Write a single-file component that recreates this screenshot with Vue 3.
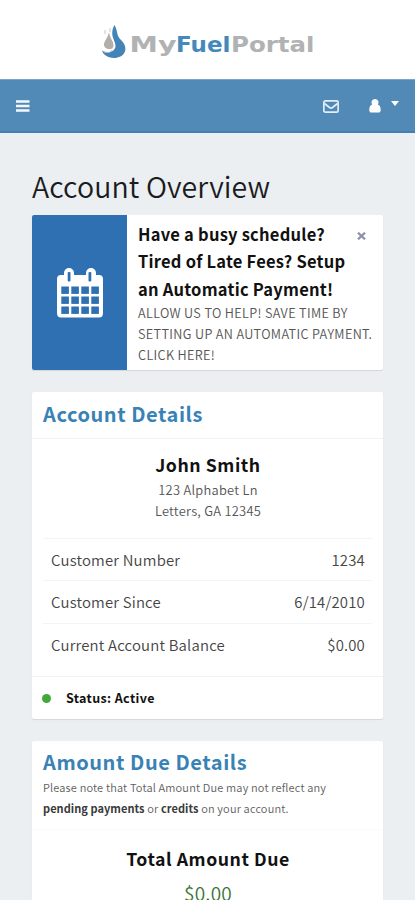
<script setup>
const details = [
  { label: 'Customer Number', value: '1234' },
  { label: 'Customer Since', value: '6/14/2010' },
  { label: 'Current Account Balance', value: '$0.00' },
]
const cellRows = [25, 35, 45]
const cellCols = [6, 16, 26, 36]
</script>

<template>
  <div class="page">
    <header class="brand">
      <svg class="logo" width="240" height="60" viewBox="0 0 240 60">
        <path d="M24.500 15C28 21 26 25 31 30C40 39 34 48 24 48C17 48 13 44 12 40.500C16 43 24 43 25.500 37C26.500 31 18.500 26 24.500 15Z" fill="#4383b5" />
        <path d="M19 22C19.500 28 23.800 31 23.500 36C22.500 41 14.500 39.500 14 35C13.700 31 18 28 19 22Z" fill="#b2aeaa" />
        <path d="M14 42C18 43 20 43 22 40M15 20v4M20 18v4" fill="none" stroke="#c4c9cd" stroke-width="1" />
        <g class="wordmark">
          <text x="39.500" y="41.700" textLength="47" lengthAdjust="spacingAndGlyphs" fill="#b1b2b4">My</text>
          <text x="86" y="41.700" textLength="54.500" lengthAdjust="spacingAndGlyphs" fill="#438aba">Fuel</text>
          <text x="141" y="41.700" textLength="83.500" lengthAdjust="spacingAndGlyphs" fill="#b1b2b4">Portal</text>
        </g>
      </svg>
    </header>

    <nav class="bar">
      <svg class="menu" width="14" height="12" viewBox="0 0 14 12"><path d="M0 1.500h13.500M0 6h13.500M0 10.500h13.500" stroke="#f3f7fb" stroke-width="2.300" /></svg>
      <svg class="mail" width="16" height="13" viewBox="0 0 16 13" fill="none" stroke="#e3edf6" stroke-width="1.700"><rect x=".85" y=".85" width="14.300" height="11.300" rx="1.500" /><path d="M1.500 3.500L6.500 7.500Q8 8.600 9.500 7.500L14.500 3.500" /></svg>
      <svg class="user" width="12" height="14" viewBox="0 0 12 14" fill="#fff"><path d="M6 0a3.400 3.400 0 0 1 2.800 5.400C11 6 12 8.500 11.600 12Q11.300 13.500 9.800 13.500H2.200Q.7 13.500.4 12C0 8.500 1 6 3.200 5.400A3.400 3.400 0 0 1 6 0Z" /></svg>
      <svg class="caret" width="8" height="5" viewBox="0 0 8 5"><path d="M0 0h8L4 5Z" fill="#fff" /></svg>
    </nav>

    <main>
      <h1>Account Overview</h1>

      <section class="promo">
        <div class="promo-icon">
          <svg width="46" height="50" viewBox="0 0 46 50">
            <path d="M4 7H7V5A5 5 0 0 1 17 5V7H29V5A5 5 0 0 1 39 5V7H42Q46 7 46 11V45Q46 49.500 42 49.500H4Q0 49.500 0 45V11Q0 7 4 7Z" fill="#fff" />
            <g fill="#2f70b2">
              <rect x="10.700" y="4" width="2.800" height="9.500" rx="1" />
              <rect x="31.500" y="4" width="2.800" height="9.500" rx="1" />
              <template v-for="y in cellRows" :key="y">
                <rect v-for="x in cellCols" :key="x" :x="x - 1.700" :y="y - 6.500" width="7.600" height="7.400" />
              </template>
            </g>
          </svg>
        </div>
        <div class="promo-body">
          <svg class="close" width="9" height="8" viewBox="0 0 9 8"><path d="M1 .7L8 7.300M8 .7L1 7.300" stroke="#8f90ae" stroke-width="2.300" /></svg>
          <h2>Have a busy schedule?<br>Tired of Late Fees? Setup<br>an Automatic Payment!</h2>
          <p>ALLOW US TO HELP! SAVE TIME BY<br>SETTING UP AN AUTOMATIC PAYMENT.<br>CLICK HERE!</p>
        </div>
      </section>

      <section class="card">
        <div class="card-head"><h3>Account Details</h3></div>
        <div class="person">
          <h4>John Smith</h4>
          <p>123 Alphabet Ln<br>Letters, GA 12345</p>
        </div>
        <dl>
          <div v-for="d in details" :key="d.label" class="row">
            <dt>{{ d.label }}</dt>
            <dd>{{ d.value }}</dd>
          </div>
        </dl>
        <div class="status"><i></i><b>Status: Active</b></div>
      </section>

      <section class="card due">
        <div class="due-head">
          <h3>Amount Due Details</h3>
          <p>Please note that Total Amount Due may not reflect any<br><b>pending payments</b> or <b>credits</b> on your account.</p>
        </div>
        <div class="total">
          <h4>Total Amount Due</h4>
          <span>$0.00</span>
        </div>
      </section>
    </main>
  </div>
</template>

<style>
body { overflow: hidden; }
</style>

<style scoped>
.page {
  height: 900px;
  overflow: hidden;
  background: #ebeff2;
  color: #444;
  font-family: "Noto Sans CJK SC", "Open Sans", sans-serif;
}
h1, h2, h3, h4, p, dl, dd { margin: 0; }
.brand { height: 79px; padding: 10px 0 0 90px; box-sizing: border-box; background: #fff; }
.logo { display: block; }
.wordmark { font: bold 22px "DejaVu Sans", sans-serif; }
.bar {
  display: flex;
  height: 54px;
  box-sizing: border-box;
  padding: 20px 16px 0 16px;
  background: #528ab7;
  border-top: 1px solid #7aa5c9;
  border-bottom: 2px solid #427fb2;
}
.mail { margin-left: auto; }
.user { margin-left: 30px; margin-top: -1px; }
.caret { margin-left: 10px; margin-top: 1px; }
main { padding: 35px 32px 0; }
h1 { height: 47px; line-height: 36px; font-size: 28.500px; letter-spacing: .1px; font-weight: 350; color: #1a1b1e; white-space: nowrap; }
.promo {
  display: flex;
  height: 155px;
  margin-bottom: 22px;
  background: #fff;
  border-radius: 2px;
  box-shadow: 0 1px 1px rgba(0, 0, 0, .1);
}
.promo-icon {
  display: flex;
  justify-content: center;
  width: 95px;
  padding-top: 53px;
  box-sizing: border-box;
  border-radius: 2px 0 0 2px;
  background: #2f70b2;
}
.promo-body { position: relative; padding: 6px 0 0 11px; flex: 1; white-space: nowrap; }
.close { position: absolute; right: 17px; top: 17px; }
h2 { height: 81px; font-size: 16.500px; letter-spacing: .23px; line-height: 27.300px; font-weight: 700; color: #111; }
.promo p { font-size: 12.700px; letter-spacing: .34px; line-height: 21px; font-weight: 350; color: #555; }
.card { background: #fff; border-radius: 2px; box-shadow: 0 1px 1px rgba(0, 0, 0, .1); }
.card-head { height: 47px; box-sizing: border-box; padding: 7px 11px 0; border-bottom: 1px solid #f2f3f4; }
h3 { font-size: 20px; letter-spacing: .56px; line-height: 30px; font-weight: 700; color: #3982b5; }
.person { height: 99px; padding: 11px 0 0 1px; box-sizing: border-box; text-align: center; }
.person h4 { margin-bottom: 1px; }
h4 { font-size: 17.700px; letter-spacing: .54px; line-height: 28px; font-weight: 700; color: #111; }
.person p { font-size: 12.900px; letter-spacing: .26px; line-height: 21px; font-weight: 350; color: #555; }
dl { height: 138px; padding: 0 11px; }
.row {
  display: flex;
  justify-content: space-between;
  height: 42.300px;
  box-sizing: border-box;
  border-top: 1px solid #f3f4f5;
  padding: 0 7px 0 8px;
  font-size: 14.900px;
  letter-spacing: .2px;
  line-height: 42px;
  font-weight: 350;
}
.status {
  display: flex;
  align-items: center;
  height: 43px;
  box-sizing: border-box;
  padding: 0 0 1px 10px;
  border-top: 1px solid #f1f2f3;
  font-size: 12.500px;
  letter-spacing: .36px;
  color: #111;
}
.status i { width: 9px; height: 9px; margin: 1px 15px 0 0; border-radius: 50%; background: #40a93a; }
.due { height: 180px; margin-top: 22px; }
.due-head { height: 89px; padding: 6px 11px 0; box-sizing: border-box; border-bottom: 1px solid #fafafa; }
.due-head p { font-size: 11px; letter-spacing: .16px; line-height: 21px; font-weight: 350; color: #606060; white-space: nowrap; }
.due-head b { color: #3a3a3a; letter-spacing: .05px; }
.total { padding: 14px 0 0 1px; text-align: center; }
.total span { display: block; margin-top: 5px; font-size: 19px; letter-spacing: .2px; line-height: 32px; font-weight: 350; color: #3c7436; }
</style>
